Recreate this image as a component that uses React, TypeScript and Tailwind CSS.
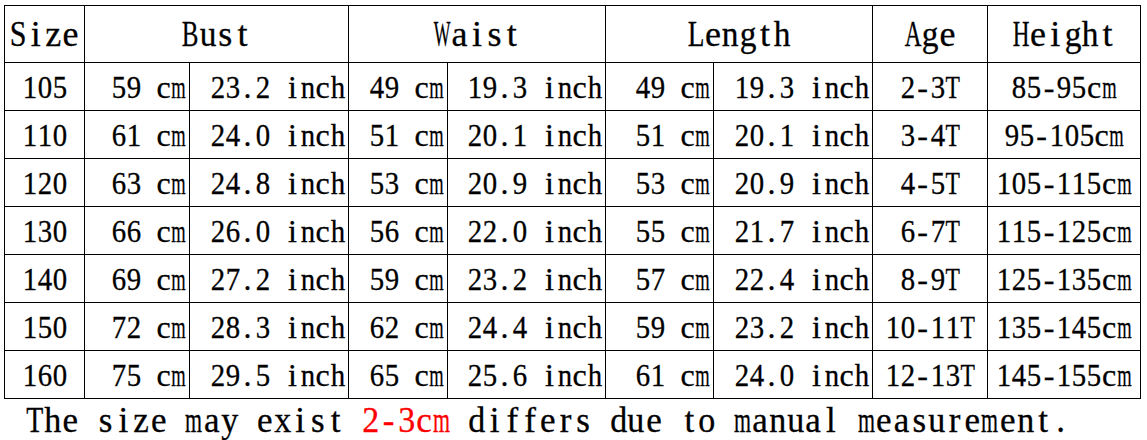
import React from "react";

const GW: Record<string, number> = {
  " ": 250, "-": 333, ".": 250,
  "0": 500, "1": 500, "2": 500, "3": 500, "4": 500, "5": 500, "6": 500, "7": 500, "8": 500, "9": 500,
  A: 722, B: 667, C: 667, D: 722, E: 611, F: 556, G: 722, H: 722, I: 333, J: 389, K: 722, L: 611, M: 889,
  N: 722, O: 722, P: 556, Q: 722, R: 667, S: 556, T: 611, U: 722, V: 722, W: 944, X: 722, Y: 722, Z: 611,
  a: 444, b: 500, c: 444, d: 500, e: 444, f: 333, g: 500, h: 500, i: 278, j: 278, k: 500, l: 278, m: 778,
  n: 500, o: 500, p: 500, q: 500, r: 333, s: 389, t: 278, u: 500, v: 500, w: 722, x: 500, y: 500, z: 444,
};

type Variant = "body" | "head" | "foot";
const V: Record<Variant, { fs: number; box: number; cls: string }> = {
  body: { fs: 32, box: 15, cls: "w-[15px]" },
  head: { fs: 36, box: 17.4, cls: "w-[17.4px]" },
  foot: { fs: 35, box: 17.7, cls: "w-[17.7px]" },
};

function Mono({ text, v }: { text: string; v: Variant }) {
  const cfg = V[v];
  return (
    <span className="inline-flex">
      {text.split("").map((c, i) => {
        const w = ((GW[c] ?? 500) / 1000) * cfg.fs;
        const s = Math.min(1, (cfg.box * 0.96) / w);
        return (
          <span key={i} className={`inline-flex justify-center ${cfg.cls}`}>
            <span className="inline-block" style={s < 1 ? { transform: `scaleX(${s})` } : undefined}>
              {c === " " ? "\u00a0" : c}
            </span>
          </span>
        );
      })}
    </span>
  );
}

const rows = [
  ["105", "59 cm", "23.2 inch", "49 cm", "19.3 inch", "49 cm", "19.3 inch", "2-3T", "85-95cm"],
  ["110", "61 cm", "24.0 inch", "51 cm", "20.1 inch", "51 cm", "20.1 inch", "3-4T", "95-105cm"],
  ["120", "63 cm", "24.8 inch", "53 cm", "20.9 inch", "53 cm", "20.9 inch", "4-5T", "105-115cm"],
  ["130", "66 cm", "26.0 inch", "56 cm", "22.0 inch", "55 cm", "21.7 inch", "6-7T", "115-125cm"],
  ["140", "69 cm", "27.2 inch", "59 cm", "23.2 inch", "57 cm", "22.4 inch", "8-9T", "125-135cm"],
  ["150", "72 cm", "28.3 inch", "62 cm", "24.4 inch", "59 cm", "23.2 inch", "10-11T", "135-145cm"],
  ["160", "75 cm", "29.5 inch", "65 cm", "25.6 inch", "61 cm", "24.0 inch", "12-13T", "145-155cm"],
];

export default function App() {
  return (
    <div className="w-[1147px] h-[440px] bg-white text-black overflow-hidden font-['Liberation_Serif','Times_New_Roman',serif] [-webkit-text-stroke:0.3px_black]">
      <div className="pl-[4px] pt-[5px]">
        <div className="grid w-fit grid-cols-[79px_104px_158px_98px_157px_107px_158px_114px_152px] grid-rows-[56px_repeat(7,47px)] gap-px bg-black border border-black">
          <div className="bg-white flex items-center justify-center text-[36px] leading-none"><Mono text="Size" v="head" /></div>
          <div className="col-span-2 bg-white flex items-center justify-center text-[36px] leading-none"><Mono text="Bust" v="head" /></div>
          <div className="col-span-2 bg-white flex items-center justify-center text-[36px] leading-none"><Mono text="Waist" v="head" /></div>
          <div className="col-span-2 bg-white flex items-center justify-center text-[36px] leading-none"><Mono text="Length" v="head" /></div>
          <div className="bg-white flex items-center justify-center text-[36px] leading-none"><Mono text="Age" v="head" /></div>
          <div className="bg-white flex items-center justify-center text-[36px] leading-none"><Mono text="Height" v="head" /></div>
          {rows.map((r, ri) => (
            <React.Fragment key={ri}>
              {r.map((cell, ci) => {
                const center = ci === 0 || ci >= 7;
                return (
                  <div
                    key={ci}
                    className={
                      center
                        ? "bg-white flex items-center justify-center text-[32px] leading-none"
                        : "bg-white flex items-center justify-end pr-[3px] text-[32px] leading-none"
                    }
                  >
                    <Mono text={cell} v="body" />
                  </div>
                );
              })}
            </React.Fragment>
          ))}
        </div>
      </div>
      <div className="h-[41px] pt-[6px] flex items-start pl-[26px] text-[35px] leading-[32px]">
        <Mono text="The size may exist " v="foot" />
        <span className="text-[#ff0000] [-webkit-text-stroke:0.3px_#ff0000]"><Mono text="2-3cm" v="foot" /></span>
        <Mono text=" differs due to manual measurement." v="foot" />
      </div>
    </div>
  );
}
